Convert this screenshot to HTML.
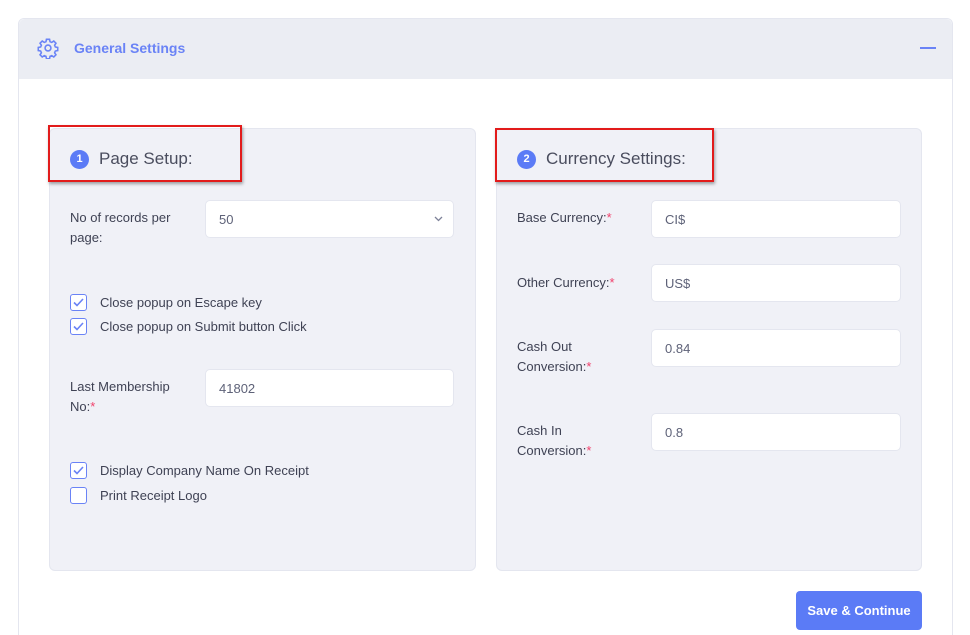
<!DOCTYPE html>
<html><head><style>
*{box-sizing:border-box;margin:0;padding:0}
html,body{width:970px;height:635px;overflow:hidden}
body{background:#fff;font-family:"Liberation Sans",sans-serif;position:relative;color:#3f4254}
.card{position:absolute;left:18px;top:18px;width:935px;height:630px;border:1px solid #e4e6ef;border-radius:6px;background:#fff}
.hdr{position:absolute;left:0;top:0;width:100%;height:60px;background:#ebedf3;border-radius:6px 6px 0 0}
.hdr .t{position:absolute;left:55px;top:21px;font-size:14px;font-weight:bold;color:#6a83f6}
.hdr .m{position:absolute;right:16px;top:28px;width:16px;height:2px;background:#6a83f6}
.panel{position:absolute;top:128px;height:443px;background:#f0f1f7;border:1px solid #e4e6ef;border-radius:6px}
.red{position:absolute;border:2px solid #e21b1b;box-shadow:1px 2px 3px rgba(0,0,0,.35)}
.ttl{position:absolute;font-size:17px;color:#4a4d5e;display:flex;align-items:center}
.num{width:19px;height:19px;border-radius:50%;background:#5b7bf6;color:#fff;font-size:11px;font-weight:bold;display:flex;align-items:center;justify-content:center;margin-right:10px}
.lbl{position:absolute;font-size:13px;line-height:20px;color:#3f4254}
.req{color:#f1416c}
.inp{position:absolute;height:38px;background:#fff;border:1px solid #e4e6ef;border-radius:5px;font-size:13px;padding:11px 13px;color:#5e6278}
.cb{position:absolute;font-size:13px;display:flex;align-items:center;color:#3f4254}
.box{width:17px;height:17px;border:1.5px solid #6a83f6;border-radius:3px;margin-right:13px;background:#fff;display:flex;align-items:center;justify-content:center}
.btn{position:absolute;left:796px;top:591px;width:126px;height:39px;background:#5b7bf6;color:#fff;border-radius:4px;font-size:13px;font-weight:bold;display:flex;align-items:center;justify-content:center}
</style></head><body>
<div class="card"><div class="hdr">
<svg style="position:absolute;left:18px;top:18px" width="22" height="22" viewBox="0 0 24 24" fill="none" stroke="#6a83f6" stroke-width="1.7"><circle cx="12" cy="12" r="3.2"/><path d="M10.3 2.5h3.4l.5 2.6 1.9.8 2.2-1.5 2.4 2.4-1.5 2.2.8 1.9 2.6.5v3.4l-2.6.5-.8 1.9 1.5 2.2-2.4 2.4-2.2-1.5-1.9.8-.5 2.6h-3.4l-.5-2.6-1.9-.8-2.2 1.5-2.4-2.4 1.5-2.2-.8-1.9-2.6-.5v-3.4l2.6-.5.8-1.9-1.5-2.2 2.4-2.4 2.2 1.5 1.9-.8z"/></svg>
<div class="t">General Settings</div><div class="m"></div></div></div>

<div class="panel" style="left:49px;width:427px"></div>
<div class="panel" style="left:496px;width:426px"></div>

<div class="red" style="left:48px;top:125px;width:194px;height:57px"></div>
<div class="ttl" style="left:70px;top:149px"><span class="num">1</span>Page Setup:</div>
<div class="red" style="left:495px;top:128px;width:219px;height:54px"></div>
<div class="ttl" style="left:517px;top:149px"><span class="num">2</span>Currency Settings:</div>

<div class="lbl" style="left:70px;top:208px;width:120px">No of records per page:</div>
<div class="inp" style="left:205px;top:200px;width:249px">50<svg style="position:absolute;right:10px;top:15px" width="9" height="6" viewBox="0 0 9 6"><path d="M1 1l3.5 3.5L8 1" stroke="#7e8299" stroke-width="1.3" fill="none"/></svg></div>

<div class="cb" style="left:70px;top:294px"><span class="box"><svg width="11" height="9" viewBox="0 0 11 9"><path d="M1 4.5l3 3L10 1" stroke="#6a83f6" stroke-width="1.6" fill="none"/></svg></span>Close popup on Escape key</div>
<div class="cb" style="left:70px;top:318px"><span class="box"><svg width="11" height="9" viewBox="0 0 11 9"><path d="M1 4.5l3 3L10 1" stroke="#6a83f6" stroke-width="1.6" fill="none"/></svg></span>Close popup on Submit button Click</div>

<div class="lbl" style="left:70px;top:377px;width:120px">Last Membership No:<span class="req">*</span></div>
<div class="inp" style="left:205px;top:369px;width:249px">41802</div>

<div class="cb" style="left:70px;top:462px"><span class="box"><svg width="11" height="9" viewBox="0 0 11 9"><path d="M1 4.5l3 3L10 1" stroke="#6a83f6" stroke-width="1.6" fill="none"/></svg></span>Display Company Name On Receipt</div>
<div class="cb" style="left:70px;top:487px"><span class="box"></span>Print Receipt Logo</div>

<div class="lbl" style="left:517px;top:208px">Base Currency:<span class="req">*</span></div>
<div class="inp" style="left:651px;top:200px;width:250px">CI$</div>
<div class="lbl" style="left:517px;top:273px">Other Currency:<span class="req">*</span></div>
<div class="inp" style="left:651px;top:264px;width:250px">US$</div>
<div class="lbl" style="left:517px;top:337px;width:110px">Cash Out Conversion:<span class="req">*</span></div>
<div class="inp" style="left:651px;top:329px;width:250px">0.84</div>
<div class="lbl" style="left:517px;top:421px;width:110px">Cash In Conversion:<span class="req">*</span></div>
<div class="inp" style="left:651px;top:413px;width:250px">0.8</div>

<div class="btn">Save &amp; Continue</div>
</body></html>
